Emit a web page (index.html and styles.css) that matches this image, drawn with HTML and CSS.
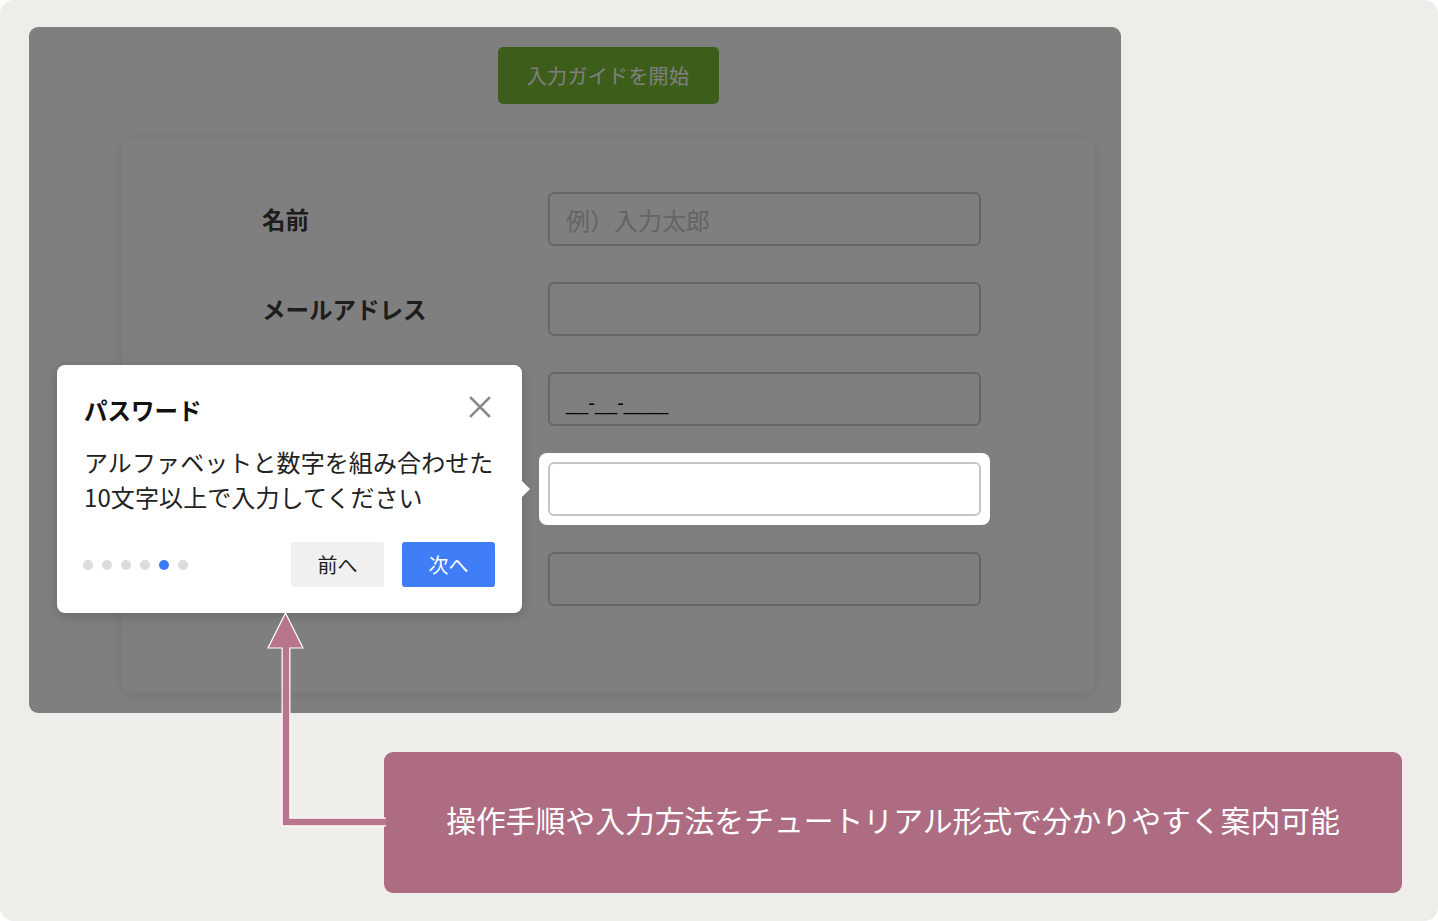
FILE: index.html
```html
<!DOCTYPE html>
<html lang="ja">
<head>
<meta charset="utf-8">
<title>入力ガイド</title>
<link rel="stylesheet" href="styles.css">
</head>
<body>
<div class="page">
  <div class="screen">
    <div class="start-row"><button class="start-btn">入力ガイドを開始</button></div>
    <div class="card">
      <div class="row"><span class="label">名前</span><div class="input placeholder">例）入力太郎</div></div>
      <div class="row"><span class="label">メールアドレス</span><div class="input"></div></div>
      <div class="row"><span class="label"></span><div class="input mask">__-__-____</div></div>
      <div class="row"><span class="label"></span><div class="focus"><div class="input focus-input"></div></div></div>
      <div class="row"><span class="label"></span><div class="input"></div></div>
    </div>
    <div class="overlay"></div>
    <div class="tour">
      <div class="tour-head">
        <h2 class="tour-title">パスワード</h2>
        <svg class="tour-close" width="22" height="22" viewBox="0 0 22 22"><path d="M2 2 L20 20 M20 2 L2 20" stroke="#8a8a8a" stroke-width="2.6" stroke-linecap="square" fill="none"/></svg>
      </div>
      <p class="tour-body">アルファベットと数字を組み合わせた10文字以上で入力してください</p>
      <div class="tour-foot">
        <div class="dots"><span class="dot"></span><span class="dot"></span><span class="dot"></span><span class="dot"></span><span class="dot active"></span><span class="dot"></span></div>
        <div class="tour-btns"><button class="btn btn-prev">前へ</button><button class="btn btn-next">次へ</button></div>
      </div>
    </div>
  </div>
  <div class="note">操作手順や入力方法をチュートリアル形式で分かりやすく案内可能</div>
  <svg class="arrow" width="1438" height="921" viewBox="0 0 1438 921">
    <path d="M286 646 L286 822 L386 822" stroke="#ffffff" stroke-width="9" fill="none"/>
    <polygon points="285.5,613 268,648 303,648" fill="#b8768e" stroke="#ffffff" stroke-width="1.2"/>
    <path d="M286 647 L286 822 L386 822" stroke="#b8768e" stroke-width="6.5" fill="none"/>
  </svg>
</div>
</body>
</html>
```
FILE: styles.css
```css
* { box-sizing: border-box; }
html, body { margin: 0; padding: 0; background: #ffffff; }
body { font-family: "Noto Sans CJK JP", "Noto Sans", sans-serif; }

.page {
  position: relative;
  width: 1438px;
  height: 921px;
  background: #eeede9;
  border-radius: 14px;
  padding: 27px 0 0 29px;
  overflow: hidden;
}

.screen {
  position: relative;
  width: 1092px;
  height: 686px;
  background: #ffffff;
  border-radius: 9px;
  padding: 20px 27px 20px 93px;
  display: flex;
  flex-direction: column;
  gap: 34px;
}

.start-row { display: flex; justify-content: center; }
.start-btn {
  width: 221px;
  height: 57px;
  border: none;
  border-radius: 5px;
  background: #7abc35;
  color: #ffffff;
  font-family: inherit;
  font-size: 20px;
  letter-spacing: 0.3px;
}

.card {
  width: 972px;
  height: 555px;
  border-radius: 12px;
  background: #ffffff;
  box-shadow: 0 2px 14px rgba(0,0,0,0.10);
  padding: 54px 113px 0 140px;
  display: flex;
  flex-direction: column;
  gap: 36px;
}

.row { display: flex; align-items: center; height: 54px; }
.label {
  width: 286px;
  font-size: 23.5px;
  font-weight: 700;
  color: #3a3a3a;
}
.input {
  width: 433px;
  height: 54px;
  border: 2px solid #cccccc;
  border-radius: 6px;
  background: #ffffff;
  display: flex;
  align-items: center;
  padding-left: 16px;
}
.placeholder { font-size: 24px; color: #c8c8c8; }
.mask { font-family: "Liberation Sans", sans-serif; font-size: 20px; color: #111; padding-top: 8px; }

.focus {
  position: relative;
  z-index: 2;
  margin: -9px;
  padding: 9px;
  background: #ffffff;
  border-radius: 8px;
}
.focus-input { border-color: #c6c6c6; }

.overlay {
  position: absolute;
  inset: 0;
  border-radius: 9px;
  background: rgba(0,0,0,0.5);
  z-index: 1;
}

.tour {
  position: absolute;
  left: 28px;
  top: 338px;
  width: 465px;
  height: 248px;
  background: #ffffff;
  border-radius: 8px;
  box-shadow: 0 3px 12px rgba(0,0,0,0.18);
  z-index: 3;
  padding: 30px 27px 26px 27px;
  display: flex;
  flex-direction: column;
}
.tour::after {
  content: "";
  position: absolute;
  right: -8px;
  top: 116px;
  border-top: 8px solid transparent;
  border-bottom: 8px solid transparent;
  border-left: 8px solid #ffffff;
}
.tour-head { display: flex; justify-content: space-between; align-items: center; height: 30px; }
.tour-title { margin: 0; font-size: 23.5px; font-weight: 700; color: #111111; line-height: 30px; }
.tour-close { margin-right: 4px; margin-top: -6px; }
.tour-body {
  margin: 19px 0 0 0;
  font-size: 24px;
  line-height: 35px;
  color: #222222;
  letter-spacing: 0.1px;
}
.tour-foot {
  margin-top: auto;
  display: flex;
  align-items: center;
  justify-content: space-between;
}
.dots { display: flex; gap: 9px; padding-left: 0; margin-left: -1px; }
.dot { width: 10px; height: 10px; border-radius: 50%; background: #dcdcdc; }
.dot.active { background: #3b7cf6; }
.tour-btns { display: flex; gap: 18px; }
.btn {
  width: 93px;
  height: 45px;
  border: none;
  border-radius: 3px;
  font-family: inherit;
  font-size: 20px;
  padding-bottom: 2px;
}
.btn-prev { background: #f0f0f0; color: #222222; }
.btn-next { background: #3f7ef7; color: #ffffff; }

.note {
  margin: 39px 0 0 355px;
  width: 1018px;
  height: 141px;
  border-radius: 9px;
  background: #ad6c82;
  color: #ffffff;
  font-size: 29.8px;
  display: flex;
  align-items: center;
  justify-content: center;
  padding-bottom: 8px;
}

.arrow {
  position: absolute;
  left: 0;
  top: 0;
  pointer-events: none;
  z-index: 5;
}
```
